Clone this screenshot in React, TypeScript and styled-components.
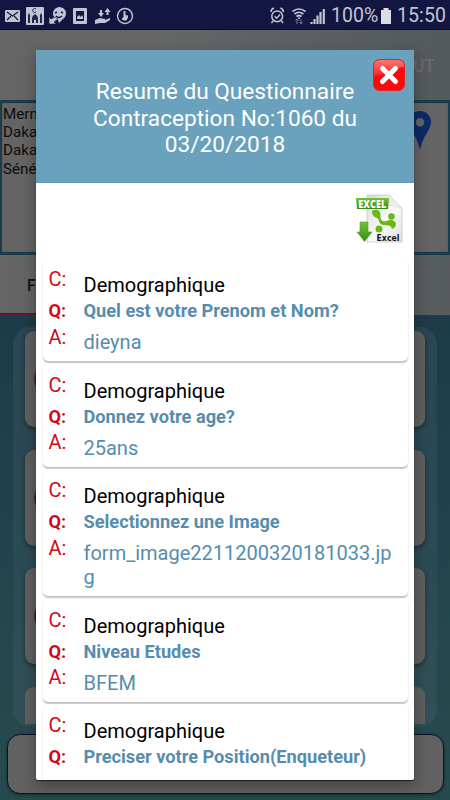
import React from "react";
import styled, { createGlobalStyle } from "styled-components";

const GlobalStyle = createGlobalStyle`
  * { box-sizing: border-box; }
  body { margin: 0; background: #26474d; font-family: Roboto, sans-serif; }
`;

const Phone = styled.div`
  position: relative;
  width: 450px;
  height: 800px;
  overflow: hidden;
  display: flex;
  flex-direction: column;
  background: linear-gradient(180deg, #1c3845 0, #1c3c49 340px, #20414d 470px, #27494d 730px, #254a4c 100%);
`;

const StatusBar = styled.header`
  flex: none;
  height: 30px;
  padding: 0 6px 0 5px;
  display: flex;
  align-items: center;
  justify-content: space-between;
  background: #131640;
  border-bottom: 1px solid #0c0e30;
  color: #c3c4d2;
`;

const StatusText = styled.span<{ $width: number }>`
  width: ${(p) => p.$width}px;
  font-size: 19.5px;
  line-height: 30px;
  letter-spacing: 0.1px;
  white-space: nowrap;
  padding-top: 3px;
`;

const StatusGroup = styled.div`
  display: flex;
  align-items: center;
  svg { display: block; flex: none; position: relative; top: 1px; }
`;

const AppBar = styled.div`
  flex: none;
  height: 70px;
  padding: 2px 15px 0;
  display: flex;
  align-items: center;
  justify-content: flex-end;
  background: linear-gradient(90deg, #656565 0%, #656666 35%, #5b5f61 70%, #53595c 100%);
  color: #686b6d;
  font-size: 17.5px;
  font-weight: 500;
`;

const AddressPanel = styled.section`
  flex: none;
  height: 155px;
  display: flex;
  justify-content: space-between;
  border: 3px solid #1b3c4b;
  border-left-width: 2px;
  border-right-width: 2px;
  background: #646464;
  box-shadow: inset 0 0 1px #333;
`;

const Address = styled.address`
  padding: 2px 0 0 1px;
  font-style: normal;
  font-size: 15.2px;
  line-height: 18.2px;
  color: #0c0c0c;
  white-space: pre-line;
`;

const PinSlot = styled.div`
  padding: 7px 14px 0 0;
`;

const Tabs = styled.nav`
  flex: none;
  height: 60px;
  display: flex;
  background: linear-gradient(90deg, #656565, #5d6062 70%, #565b5e);
`;

const Tab = styled.div<{ $active?: boolean }>`
  width: 225px;
  padding: 2px 0 0 27px;
  font-size: 16px;
  font-weight: 500;
  line-height: 58px;
  color: #111;
  border-bottom: ${(p) => (p.$active ? "2px solid #65142f" : "none")};
`;

const ListPanel = styled.main`
  flex: none;
  height: 400px;
  margin: 12px 13px 0;
  padding: 4px 12px 3px;
  display: flex;
  flex-direction: column;
  gap: 22.5px;
  border-radius: 18px;
  background: linear-gradient(180deg, #2a4653, #2a4b55 60%, #325055);
`;

const ListCard = styled.div<{ $cut?: boolean }>`
  height: ${(p) => (p.$cut ? 37 : 96)}px;
  flex: none;
  display: flex;
  align-items: center;
  padding-left: 9px;
  border-radius: ${(p) => (p.$cut ? "9px 9px 0 0" : "9px")};
  background: #5f5f5f;
  box-shadow: ${(p) => (p.$cut ? "none" : "0 2px 4px rgba(0, 0, 0, 0.4)")};
`;

const Avatar = styled.span`
  width: 32px;
  height: 32px;
  border-radius: 50%;
  background: #4f2614;
`;

const BottomButton = styled.div`
  flex: none;
  height: 60px;
  margin: 7px 6.5px 0;
  border: 1.5px solid #0b1130;
  border-radius: 13px;
  background: #616161;
  box-shadow: 0 1px 3px rgba(0, 0, 0, 0.4);
`;

const Dialog = styled.div`
  position: absolute;
  left: 36px;
  top: 50px;
  width: 378px;
  height: 730px;
  overflow: hidden;
  display: flex;
  flex-direction: column;
  border-radius: 2px;
  background: #fff;
`;

const DialogShade = styled.div`
  position: absolute;
  left: 36px;
  top: 50px;
  width: 378px;
  height: 730px;
  border-radius: 2px;
  box-shadow: 0 1px 1px rgba(0, 0, 0, 0.6), 0 6px 14px 1px rgba(0, 0, 0, 0.28);
`;

const DialogHeader = styled.div`
  position: relative;
  flex: none;
  height: 133px;
  padding: 29px 40px 0;
  background: #6aa1bc;
  border-bottom: 1px solid #5c9abb;
  color: #fff;
  text-align: center;
  font-size: 22.65px;
  line-height: 26.5px;
  white-space: pre-line;
`;

const CloseButton = styled.button`
  position: absolute;
  right: 8px;
  top: 8px;
  width: 34px;
  height: 34px;
  padding: 0;
  border: 0;
  background: none;
  svg { display: block; }
`;

const Toolbar = styled.div`
  flex: none;
  height: 75px;
  padding: 11px 11.5px 0;
  display: flex;
  justify-content: flex-end;
`;

const Entries = styled.div`
  display: flex;
  flex-direction: column;
  gap: 2.5px;
  padding: 0 6.5px;
`;

const Entry = styled.article`
  flex: none;
  min-height: 103px;
  display: grid;
  grid-template-columns: 35px 1fr;
  padding: 9px 10px 7px 6px;
  border-radius: 5px;
  background: #fff;
  box-shadow: 0 2px 1.5px rgba(0, 0, 0, 0.24), 0 0 1px rgba(0, 0, 0, 0.05);
`;

const Labels = styled.div`
  display: flex;
  flex-direction: column;
  color: #cf0a19;
`;

const Label = styled.span<{ $bold?: boolean }>`
  height: ${(p) => (p.$bold ? 25.5 : 24)}px;
  line-height: 24px;
  font-size: ${(p) => (p.$bold ? 18.2 : 20)}px;
  font-weight: ${(p) => (p.$bold ? 700 : 400)};
  &:first-child { margin-bottom: 8px; }
`;

const Texts = styled.div`
  display: flex;
  flex-direction: column;
  padding-top: 6px;
  color: #558dae;
`;

const Category = styled.span`
  height: 26px;
  line-height: 24px;
  font-size: 20px;
  color: #000;
`;

const Question = styled.strong`
  height: 31.3px;
  line-height: 24px;
  font-size: 18.2px;
  font-weight: 700;
  white-space: nowrap;
`;

const Answer = styled.span`
  margin-bottom: -0.3px;
  line-height: 24px;
  font-size: 20px;
  word-break: break-all;
`;

const NotificationIcons = () => (
  <svg width="130" height="20" viewBox="0 0 130 20" fill="#c3c4d2">
    <rect x="0" y="4" width="15" height="12" rx="1" />
    <path d="M2 6l5.500 4L13 6M2 14l4-4M13 14l-4-4" stroke="#171a43" strokeWidth="1.300" fill="none" />
    <rect x="21" y="1" width="18" height="18" rx="1" />
    <path d="M23 17V9l1-2 1 2v8M35 17V9l1-2 1 2v8M27 17v-5q0-2 3-4 3 2 3 4v5h-2v-3h-2v3z" fill="#242748" />
    <path d="M31 3a2 2 0 1 0 0 3" stroke="#242748" fill="none" />
    <path d="M61 8a6.500 6.500 0 0 1-3 5l-4 4-1-3-4-3a6.500 6.500 0 1 1 12-3z" />
    <path d="M50 7l2-1M56 6l2 1M51 10q3 3 6 0" stroke="#171a43" strokeWidth="1.500" fill="none" />
    <path d="M44 11v7h7l-2-2 4-3-3-2-4 2z" stroke="#171a43" strokeWidth=".6" />
    <path fillRule="evenodd" d="M69 2h12q1 0 1 1v14q0 1-1 1H69q-1 0-1-1V3q0-1 1-1zm2 3v10h8V5z" />
    <path d="M72 13v-2l2-2 1.500 2L77 9l1 2v2z" />
    <path d="M90 14l5-2 5 1v1l5-2v2l-5 3h-5l-5 1zM95 4h2v3h2l-3 4-3-4h2zM99.500 6l3-4 3 4h-2v3h-2V6z" />
    <circle cx="120" cy="10" r="7.500" fill="none" stroke="#c3c4d2" strokeWidth="1.400" />
    <path d="M118.500 5h2v4l2.500.5v2l-1.500 3h-3l-2-1.500 2-2z" />
  </svg>
);

const SignalIcons = () => (
  <svg width="56" height="20" viewBox="0 0 56 20" fill="none" stroke="#c3c4d2">
    <circle cx="7.200" cy="10.300" r="5.400" strokeWidth="1.500" />
    <path d="M1 6q0-3 3-4M13.400 6q0-3-3-4M3 15l-1.500 2M11.500 15l1.500 2M4.700 10.200l2 2 3.400-3.600" strokeWidth="1.500" />
    <path d="M22.500 5.500q6.500-5 13 0M24.500 8q4.500-3.500 9 0M26.500 10.500q2.500-2 5 0" strokeWidth="1.700" />
    <circle cx="29" cy="12.200" r="1" fill="#c3c4d2" stroke="none" />
    <path d="M27 18v-5M25.500 15l1.500-2 1.500 2M31 13v5M29.500 16l1.500 2 1.500-2" stroke="#747792" />
    <path d="M41.500 18v-2M44.500 18v-5M47.500 18V9.500M50.500 18V6M53.800 18V3" strokeWidth="2.200" />
  </svg>
);

const BatteryIcon = () => (
  <svg width="12" height="18" viewBox="0 0 12 18" fill="#dcdce5">
    <path d="M1 3h2.500V1h5v2H11v14H1z" />
  </svg>
);

const MapPin = () => (
  <svg width="28" height="42" viewBox="0 0 28 42">
    <path fillRule="evenodd" fill="#0a2b68" d="M14 1a11 11 0 0 1 11 11c0 8-7 11-11 28C10 23 3 20 3 12A11 11 0 0 1 14 1zm0 7a4.300 4.300 0 1 0 0 8.600A4.300 4.300 0 0 0 14 8z" />
  </svg>
);

const CloseIcon = () => (
  <svg width="34" height="34" viewBox="0 0 34 34">
    <defs>
      <linearGradient id="closeShine" x2="0" y2="1">
        <stop stopColor="#ff9a94" />
        <stop offset="1" stopColor="#f72b28" />
      </linearGradient>
    </defs>
    <rect x="1.500" y="1.500" width="31" height="31" rx="6" fill="#f90b0b" stroke="#df2525" />
    <path d="M2 13V8q0-6 6-6h18q6 0 6 6v1Q22 11 17 14q-7 4-15 4z" fill="url(#closeShine)" opacity=".75" />
    <path d="M10.500 10.500l13 13M23.500 10.500l-13 13" stroke="#fff" strokeWidth="5" strokeLinecap="round" />
  </svg>
);

const ExcelIcon = () => (
  <svg width="48" height="50" viewBox="0 0 48 50">
    <defs>
      <linearGradient id="sheet" x2="1" y2="1">
        <stop stopColor="#d8d8da" />
        <stop offset=".55" stopColor="#fafafa" />
        <stop offset="1" stopColor="#dedede" />
      </linearGradient>
      <linearGradient id="leaf" x2="0" y2="1">
        <stop stopColor="#72c43a" />
        <stop offset="1" stopColor="#318d0d" />
      </linearGradient>
    </defs>
    <path d="M12 1h22l13 13v34H12z" fill="url(#sheet)" stroke="#c9c9c9" strokeWidth=".8" />
    <path d="M34 1l13 13-13-3z" fill="#eee" stroke="#ccc" strokeWidth=".5" />
    <path d="M17 17c5-3 9 0 8.500 5-.5 4 2 6 6 5 4-2 9-1 9.500 3 0 3-2 4-4 5-1-5-5-3-9-4-5-1-3-5-6-7-3-1-5-3-5-7z" fill="#69b811" />
    <circle cx="36.500" cy="22.500" r="3.300" fill="#69b811" />
    <circle cx="24" cy="35" r="3.500" fill="#69b811" />
    <path d="M1 4h33l-1 11H2z" fill="url(#leaf)" />
    <text x="17.300" y="13.500" textAnchor="middle" textLength="28" lengthAdjust="spacingAndGlyphs" fontFamily="Open Sans, sans-serif" fontSize="10.500" fontWeight="800" fill="#fff">EXCEL</text>
    <path d="M5 28h8v10h4L9.500 47.500 2 38h3z" fill="url(#leaf)" stroke="#5d9f31" strokeWidth=".6" />
    <text x="21.500" y="46.500" textLength="23" lengthAdjust="spacingAndGlyphs" fontFamily="DejaVu Sans, sans-serif" fontSize="8" fontWeight="700" fill="#151515">Excel</text>
  </svg>
);

const entries = [
  { question: "Quel est votre Prenom et Nom?", answer: "dieyna" },
  { question: "Donnez votre age?", answer: "25ans" },
  { question: "Selectionnez une Image", answer: "form_image2211200320181033.jpg" },
  { question: "Niveau Etudes", answer: "BFEM" },
  { question: "Preciser votre Position(Enqueteur)", answer: "" },
];

export default function App() {
  return (
    <Phone>
      <GlobalStyle />
      <StatusBar>
        <StatusGroup><NotificationIcons /></StatusGroup>
        <StatusGroup>
          <SignalIcons />
          <StatusText $width={54}>&nbsp;100%</StatusText>
          <BatteryIcon />
          <StatusText $width={52}>&nbsp;15:50</StatusText>
        </StatusGroup>
      </StatusBar>
      <AppBar>LOGOUT</AppBar>
      <AddressPanel>
        <Address>{"Mermoz\nDakar\nDakar\nSénégal"}</Address>
        <PinSlot><MapPin /></PinSlot>
      </AddressPanel>
      <Tabs><Tab $active>F</Tab></Tabs>
      <ListPanel>
        <ListCard><Avatar /></ListCard>
        <ListCard><Avatar /></ListCard>
        <ListCard><Avatar /></ListCard>
        <ListCard $cut />
      </ListPanel>
      <BottomButton />
      <DialogShade />
      <Dialog role="dialog">
        <DialogHeader>
          {"Resumé du Questionnaire\nContraception No:1060 du\n03/20/2018"}
          <CloseButton aria-label="Fermer"><CloseIcon /></CloseButton>
        </DialogHeader>
        <Toolbar><ExcelIcon /></Toolbar>
        <Entries>
          {entries.map((e) => (
            <Entry key={e.question}>
              <Labels>
                <Label>C:</Label>
                <Label $bold>Q:</Label>
                {e.answer && <Label>A:</Label>}
              </Labels>
              <Texts>
                <Category>Demographique</Category>
                <Question>{e.question}</Question>
                {e.answer && <Answer>{e.answer}</Answer>}
              </Texts>
            </Entry>
          ))}
        </Entries>
      </Dialog>
    </Phone>
  );
}
